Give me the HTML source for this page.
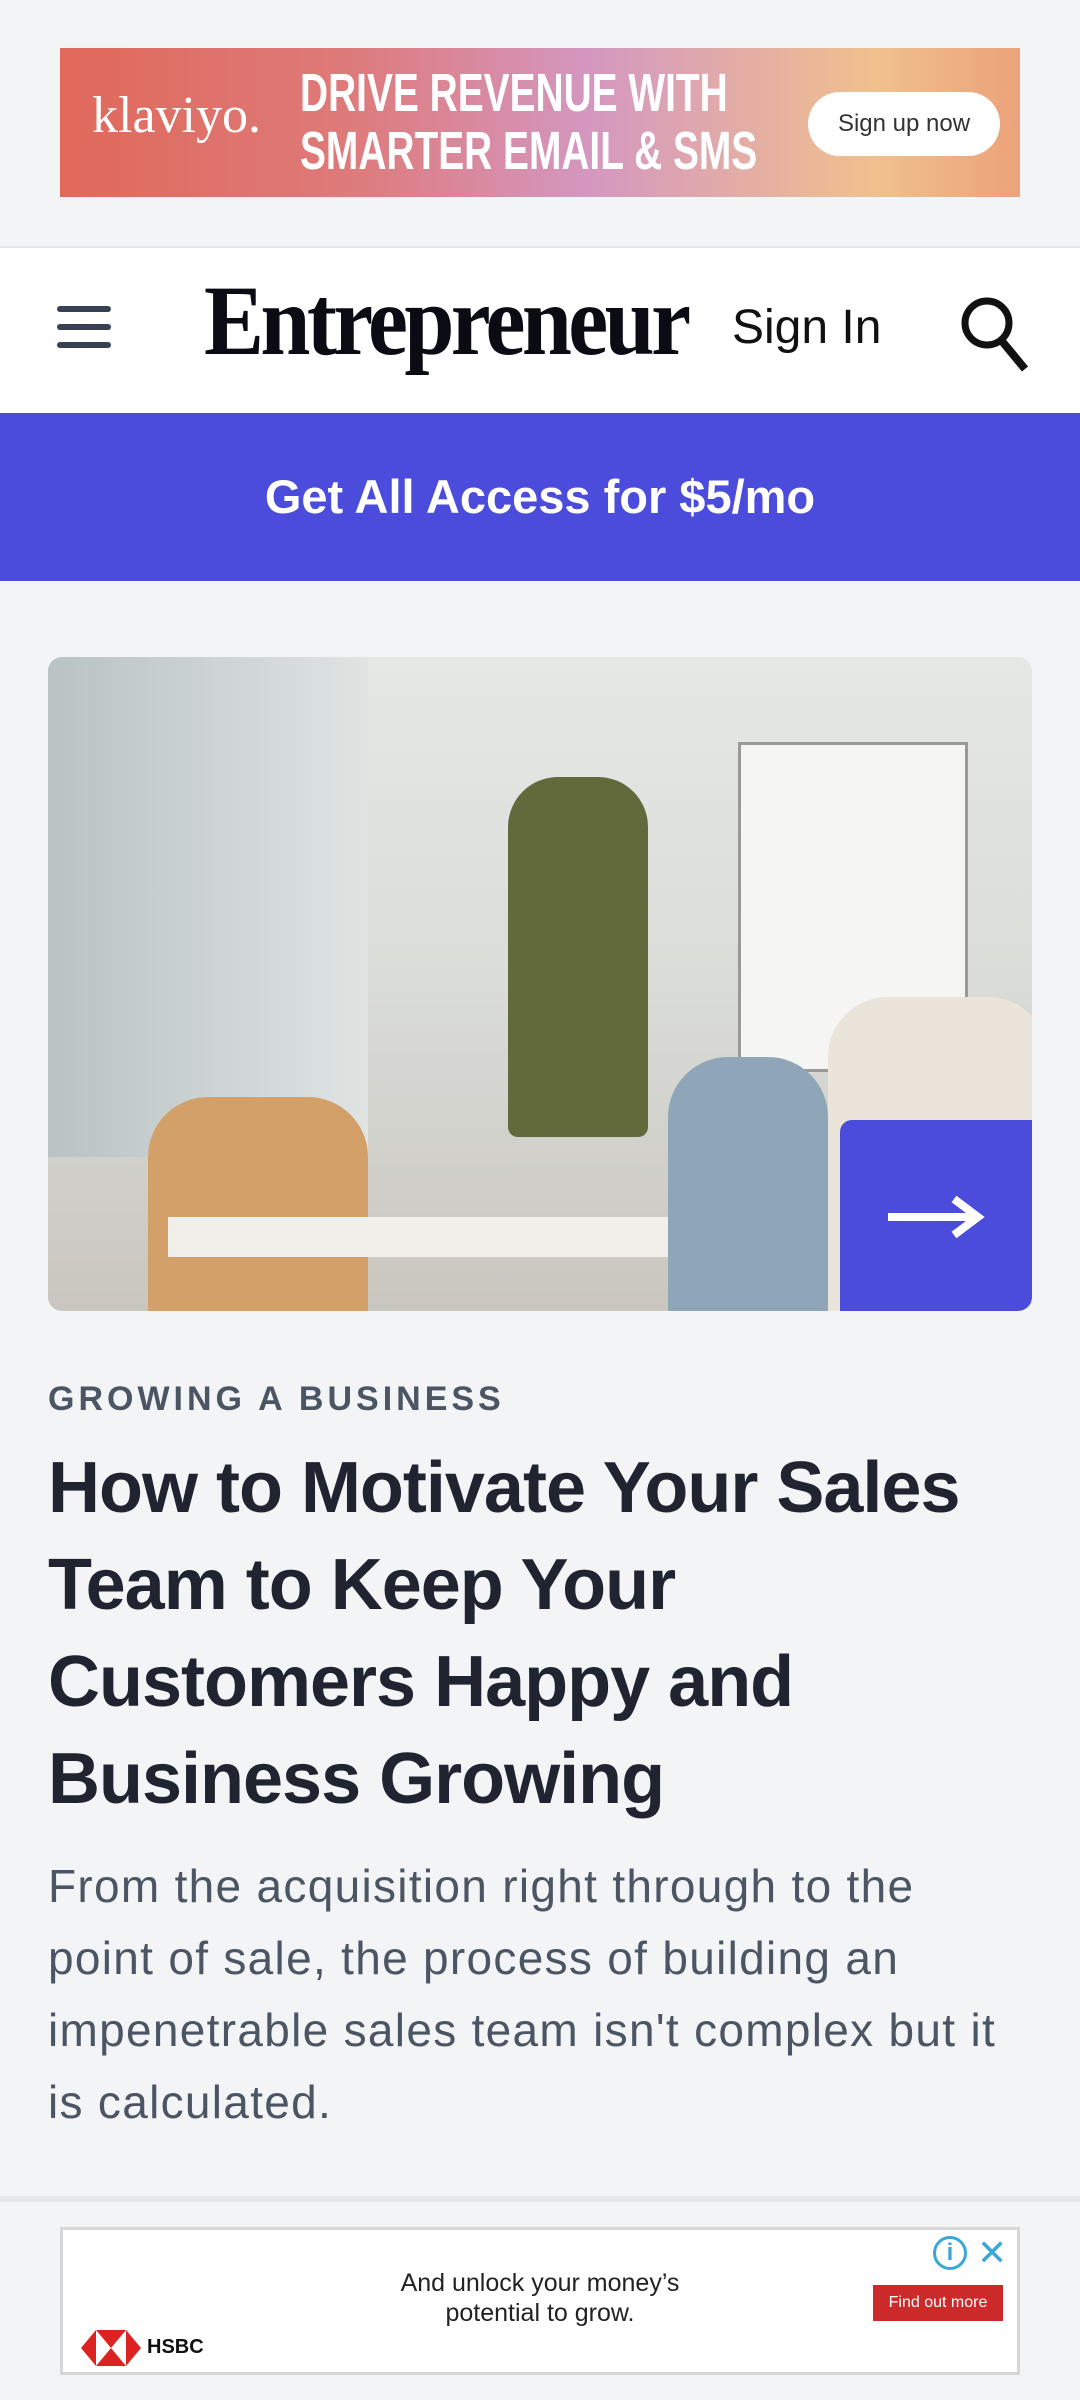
<!DOCTYPE html>
<html><head><meta charset="utf-8"><style>
*{margin:0;padding:0;box-sizing:border-box}
body{width:1080px;height:2400px;background:#f3f4f6;font-family:"Liberation Sans",sans-serif;position:relative;overflow:hidden}
.abs{position:absolute}
</style></head><body>
<div class="abs" style="left:60px;top:48px;width:960px;height:149px;background:linear-gradient(90deg,#e0695a 0%,#de7a7a 30%,#d497c0 55%,#f0c08e 85%,#eca27a 100%)">
  <div class="abs" style="left:32px;top:38px;font-family:'Liberation Serif',serif;font-size:52px;color:#fff">klaviyo.</div>
  <div class="abs" style="left:240px;top:16px;font-size:54px;font-weight:bold;color:#fff;line-height:58px;transform:scaleX(0.72);transform-origin:left;white-space:nowrap">DRIVE REVENUE WITH<br>SMARTER EMAIL &amp; SMS</div>
  <div class="abs" style="left:748px;top:44px;width:192px;height:64px;border-radius:32px;background:#fff;color:#333;font-size:24px;text-align:center;line-height:64px">Sign up now</div>
</div>
<div class="abs" style="left:0;top:246px;width:1080px;height:167px;background:#fff;border-top:2px solid #e5e7eb">
  <div class="abs" style="left:57px;top:58px;width:54px;height:6px;background:#374151;border-radius:3px"></div>
  <div class="abs" style="left:57px;top:76px;width:54px;height:6px;background:#374151;border-radius:3px"></div>
  <div class="abs" style="left:57px;top:94px;width:54px;height:6px;background:#374151;border-radius:3px"></div>
  <div class="abs" style="left:204px;top:18px;font-family:'Liberation Serif',serif;font-weight:bold;font-size:100px;color:#0b0b14;letter-spacing:-4px;transform:scaleX(0.9);transform-origin:left;line-height:110px">Entrepreneur</div>
  <div class="abs" style="left:732px;top:50px;font-size:48px;color:#111;line-height:60px">Sign In</div>
  <svg class="abs" style="left:955px;top:45px" width="80" height="80" viewBox="0 0 80 80"><circle cx="32" cy="30" r="22" fill="none" stroke="#111" stroke-width="7"/><line x1="46" y1="47" x2="70" y2="76" stroke="#111" stroke-width="8"/></svg>
</div>
<div class="abs" style="left:0;top:413px;width:1080px;height:168px;background:#4c4cdc;color:#fff;font-size:47px;font-weight:bold;text-align:center;line-height:168px">Get All Access for $5/mo</div>
<div class="abs" style="left:48px;top:657px;width:984px;height:654px;border-radius:14px;overflow:hidden;background:linear-gradient(180deg,#e6e8e6 0%,#dadcd8 50%,#c9c6bf 100%)">
  <div class="abs" style="left:0;top:0;width:320px;height:500px;background:linear-gradient(90deg,#b9c2c4,#dfe4e3)"></div>
  <div class="abs" style="left:690px;top:85px;width:230px;height:330px;background:#f5f5f3;border:3px solid #999"></div>
  <div class="abs" style="left:100px;top:440px;width:220px;height:214px;background:#d4a06a;border-radius:60px 60px 0 0"></div>
  <div class="abs" style="left:460px;top:120px;width:140px;height:360px;background:#626a3c;border-radius:50px 50px 10px 10px"></div>
  <div class="abs" style="left:120px;top:560px;width:620px;height:40px;background:#f1efea"></div>
  <div class="abs" style="left:620px;top:400px;width:160px;height:254px;background:#8fa6b8;border-radius:60px 60px 0 0"></div>
  <div class="abs" style="left:780px;top:340px;width:220px;height:314px;background:#ebe4da;border-radius:60px 60px 0 0"></div>
  <div class="abs" style="left:792px;top:463px;width:192px;height:191px;background:#4c4cdc;border-top-left-radius:12px"></div>
  <svg class="abs" style="left:838px;top:530px" width="100" height="60" viewBox="0 0 100 60"><line x1="2" y1="30" x2="85" y2="30" stroke="#fff" stroke-width="8"/><path d="M68 12 L92 30 L68 48" fill="none" stroke="#fff" stroke-width="8"/></svg>
</div>
<div class="abs" style="left:48px;top:1380px;font-size:34px;font-weight:bold;color:#4b5563;letter-spacing:4px">GROWING A BUSINESS</div>
<div class="abs" style="left:48px;top:1440px;width:1000px;font-size:72px;font-weight:bold;color:#1f2430;line-height:97px;letter-spacing:-1px">How to Motivate Your Sales Team to Keep Your Customers Happy and Business Growing</div>
<div class="abs" style="left:48px;top:1850px;width:965px;font-size:46px;color:#4b5563;line-height:72px;letter-spacing:1.3px">From the acquisition right through to the point of sale, the process of building an impenetrable sales team isn't complex but it is calculated.</div>
<div class="abs" style="left:0;top:2196px;width:1080px;height:204px;background:#f3f4f6;border-top:6px solid #e5e7eb"></div>
<div class="abs" style="left:60px;top:2227px;width:960px;height:148px;background:#fff;border:3px solid #d6d6d6">
  <div class="abs" style="left:0;top:38px;width:954px;text-align:center;font-size:25px;color:#222;line-height:30px">And unlock your money’s<br>potential to grow.</div>
  <div class="abs" style="left:810px;top:55px;width:130px;height:36px;background:#cc2a2a;color:#fff;font-size:16px;text-align:center;line-height:36px">Find out more</div>
  <div class="abs" style="left:870px;top:6px;width:34px;height:34px;border:3px solid #3aa7d6;border-radius:50%;color:#3aa7d6;font-size:24px;text-align:center;line-height:28px;font-weight:bold">i</div>
  <div class="abs" style="left:914px;top:2px;color:#3aa7d6;font-size:36px">✕</div>
  <svg class="abs" style="left:18px;top:98px" width="60" height="40" viewBox="0 0 60 40"><polygon points="0,20 15,2 45,2 60,20 45,38 15,38" fill="#d22"/><polygon points="15,2 45,38 45,2 15,38" fill="#fff"/></svg>
  <div class="abs" style="left:84px;top:106px;font-size:20px;font-weight:bold;color:#111">HSBC</div>
</div>
</body></html>
